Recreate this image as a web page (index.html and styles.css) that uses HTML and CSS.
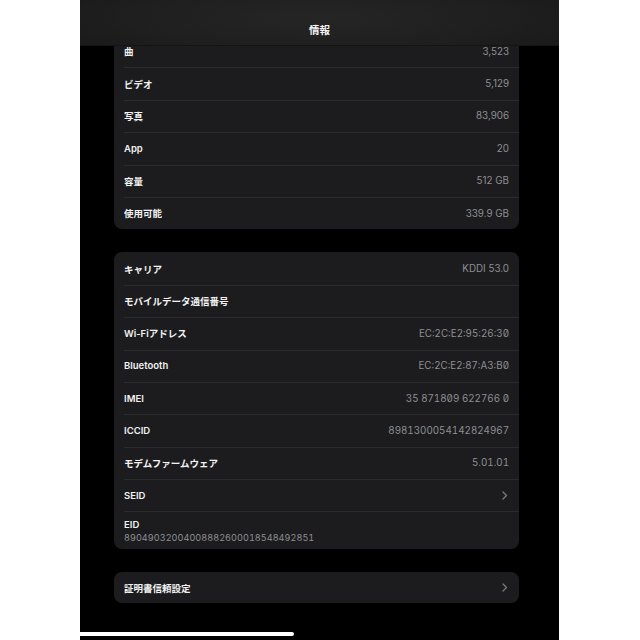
FILE: index.html
```html
<!DOCTYPE html>
<html lang="ja">
<head>
<meta charset="utf-8">
<link rel="stylesheet" href="styles.css">
</head>
<body>
<div class="screen">
  <div class="content">
    <div class="card first">
      <div class="row"><span class="label">曲</span><span class="value">3,523</span></div>
      <div class="row"><span class="label">ビデオ</span><span class="value">5,129</span></div>
      <div class="row"><span class="label">写真</span><span class="value">83,906</span></div>
      <div class="row"><span class="label">App</span><span class="value">20</span></div>
      <div class="row"><span class="label">容量</span><span class="value">512 GB</span></div>
      <div class="row"><span class="label">使用可能</span><span class="value">339.9 GB</span></div>
    </div>
    <div class="card">
      <div class="row"><span class="label">キャリア</span><span class="value">KDDI 53.0</span></div>
      <div class="row"><span class="label">モバイルデータ通信番号</span><span class="value"></span></div>
      <div class="row"><span class="label">Wi-Fiアドレス</span><span class="value mono slash">EC:2C:E2:95:26:30</span></div>
      <div class="row"><span class="label">Bluetooth</span><span class="value mono slash">EC:2C:E2:87:A3:B0</span></div>
      <div class="row"><span class="label">IMEI</span><span class="value mono slash">35 871809 622766 0</span></div>
      <div class="row"><span class="label">ICCID</span><span class="value mono">8981300054142824967</span></div>
      <div class="row"><span class="label">モデムファームウェア</span><span class="value mono">5.01.01</span></div>
      <div class="row"><span class="label">SEID</span><span class="chev"><svg width="6" height="9" viewBox="0 0 6 9"><path d="M1 1 L4.5 4.5 L1 8" fill="none" stroke="#7a7a80" stroke-width="1.3" stroke-linecap="round" stroke-linejoin="round"/></svg></span></div>
      <div class="row stack"><span class="label">EID</span><span class="value mono eid">89049032004008882600018548492851</span></div>
    </div>
    <div class="card">
      <div class="row"><span class="label">証明書信頼設定</span><span class="chev"><svg width="6" height="9" viewBox="0 0 6 9"><path d="M1 1 L4.5 4.5 L1 8" fill="none" stroke="#7a7a80" stroke-width="1.3" stroke-linecap="round" stroke-linejoin="round"/></svg></span></div>
    </div>
  </div>
  <div class="header"><span class="title">情報</span></div>
  <div class="home"></div>
</div>
</body>
</html>
```

FILE: styles.css
```css
html, body {
  margin: 0;
  padding: 0;
  background: #ffffff;
}
body {
  width: 640px;
  height: 640px;
  overflow: hidden;
  font-family: "Inter", "Noto Sans CJK JP", sans-serif;
}
.screen {
  position: relative;
  margin-left: 80px;
  width: 479px;
  height: 640px;
  background: #000000;
  overflow: hidden;
}
.content {
  padding: 35px 40px 0 34px;
  display: flex;
  flex-direction: column;
  gap: 23px;
}
.card {
  background: #1c1c1e;
  border-radius: 8px;
  overflow: hidden;
}
.row {
  position: relative;
  height: 32.4px;
  display: flex;
  align-items: center;
  justify-content: space-between;
  padding: 0 10px;
  box-sizing: border-box;
}
.row + .row::before {
  content: "";
  position: absolute;
  top: 0;
  left: 10px;
  right: 0;
  height: 1px;
  background: #2c2c2e;
}
.card:last-child .row {
  height: 31px;
}
.label {
  font-family: "Inter", "Noto Sans CJK JP", sans-serif;
  font-size: 9.5px;
  font-weight: 600;
  color: #f2f2f2;
}
.value {
  font-size: 9.8px;
  color: #8e8e93;
  font-weight: 400;
}
.mono {
  font-feature-settings: "tnum" 1;
}
.slash {
  font-feature-settings: "tnum" 1, "zero" 1;
}
.chev {
  display: flex;
  align-items: center;
  margin-right: 1px;
}
.row.stack {
  height: 38px;
  flex-direction: column;
  align-items: flex-start;
  justify-content: center;
  gap: 2px;
  padding-top: 2px;
}
.eid {
  font-size: 9.1px;
  letter-spacing: 0.05px;
}
.header {
  position: absolute;
  top: 0;
  left: 0;
  right: 0;
  height: 46px;
  background: radial-gradient(ellipse 70% 120% at 50% 40%, #252525 0%, #1f1f1f 55%, #181818 100%);
  border-bottom: 1px solid #141414;
  box-sizing: border-box;
  display: flex;
  justify-content: center;
  align-items: flex-end;
  padding-bottom: 8px;
}
.title {
  font-family: "Noto Sans CJK JP", sans-serif;
  font-size: 10.5px;
  font-weight: 700;
  color: #f5f5f5;
}
.home {
  position: absolute;
  left: 0;
  top: 632px;
  width: 214px;
  height: 3.5px;
  background: #ffffff;
  border-radius: 0 2px 2px 0;
}
```
